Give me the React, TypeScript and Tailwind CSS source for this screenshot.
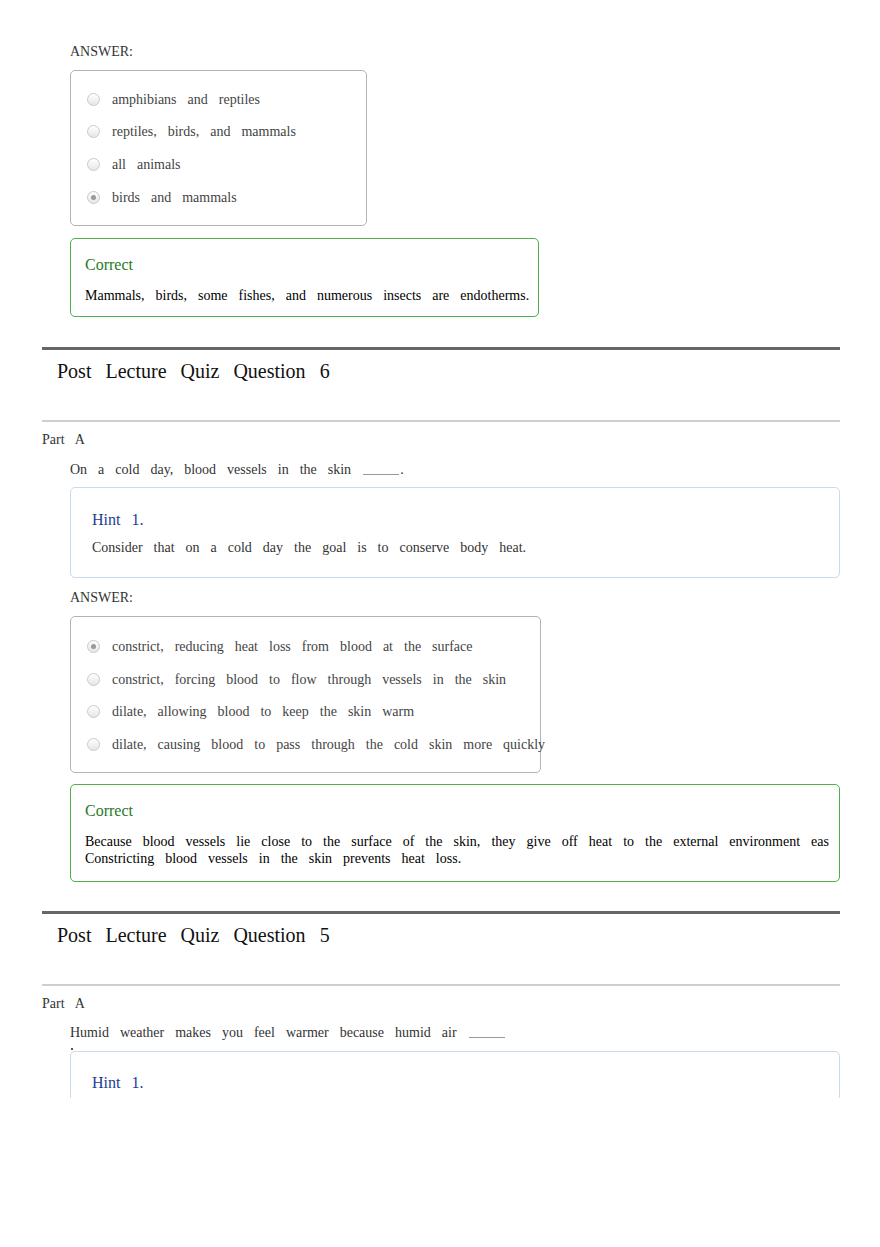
import React from 'react';

type Option = { text: string; checked?: boolean };

function Radio({ checked }: { checked?: boolean }) {
  return (
    <span className="w-[13px] h-[13px] rounded-full border border-[#c9c9c9] bg-gradient-to-b from-white to-[#e6e6e6] flex items-center justify-center shrink-0">
      {checked && <span className="w-[5px] h-[5px] rounded-full bg-[#9a9a9a]" />}
    </span>
  );
}

function AnswerBox({ options, width, pt }: { options: Option[]; width: string; pt: string }) {
  return (
    <div className={`${width} ${pt} pb-[11px] border border-[#b3b3b3] rounded-[5px]`}>
      {options.map((o) => (
        <div key={o.text} className="h-[32.67px] flex items-center pl-[16px] gap-[12px] whitespace-nowrap">
          <Radio checked={o.checked} />
          <span className="text-[#444] text-[14px] leading-[17px] [word-spacing:7.5px]">{o.text}</span>
        </div>
      ))}
    </div>
  );
}

function Blank() {
  return <span className="inline-block w-[36px] border-b border-[#999] align-baseline translate-y-[1px] mx-[1px]" />;
}

function Heading({ n }: { n: number }) {
  return (
    <>
      <div className="h-[3px] bg-[#666]" />
      <h2 className="mt-[8.5px] ml-[15px] text-[20px] leading-[24px] text-[#111] [word-spacing:9px]">
        Post Lecture Quiz Question {n}
      </h2>
      <div className="mt-[37px] h-[2px] bg-[#cfcfcf]" />
    </>
  );
}

export default function App() {
  const text14 = 'text-[14px] leading-[17px] [word-spacing:7.5px]';
  return (
    <div className="w-[880px] h-[1247px] bg-white font-[family-name:'Liberation_Serif','Times_New_Roman',serif]">
      <div className="h-[1098px] overflow-hidden pl-[42px] pr-[40px] pt-[43px]">
        {/* previous question tail */}
        <div className="pl-[28px]">
          <p className={`${text14} text-[#333]`}>ANSWER:</p>
          <div className="mt-[10px]">
            <AnswerBox
              width="w-[297px]"
              pt="pt-[12px]"
              options={[
                { text: 'amphibians and reptiles' },
                { text: 'reptiles, birds, and mammals' },
                { text: 'all animals' },
                { text: 'birds and mammals', checked: true },
              ]}
            />
          </div>
          <div className="mt-[12px] w-[469px] border-[1.5px] border-[#4db04a] rounded-[5px] pl-[14px] pt-[16px] pb-[12px]">
            <p className="text-[16px] leading-[20px] text-[#1f7a1f]">Correct</p>
            <p className={`mt-[12.5px] ${text14} text-black`}>
              Mammals, birds, some fishes, and numerous insects are endotherms.
            </p>
          </div>
        </div>

        {/* Question 6 */}
        <div className="mt-[30px]">
          <Heading n={6} />
          <p className={`mt-[9.5px] ${text14} text-[#333]`}>Part A</p>
          <div className="pl-[28px]">
            <p className={`mt-[13px] ${text14} text-[#333]`}>
              On a cold day, blood vessels in the skin <Blank />.
            </p>
            <div className="mt-[8.5px] border border-[#c8dbef] rounded-[5px] pl-[21px] pt-[22px] pb-[20.5px]">
              <p className="text-[16px] leading-[20px] text-[#1b3d96] [word-spacing:7px]">Hint 1.</p>
              <p className={`mt-[9.5px] ${text14} text-[#333]`}>
                Consider that on a cold day the goal is to conserve body heat.
              </p>
            </div>
            <p className={`mt-[11px] ${text14} text-[#333]`}>ANSWER:</p>
            <div className="mt-[10.5px]">
              <AnswerBox
                width="w-[471px]"
                pt="pt-[13px]"
                options={[
                  { text: 'constrict, reducing heat loss from blood at the surface', checked: true },
                  { text: 'constrict, forcing blood to flow through vessels in the skin' },
                  { text: 'dilate, allowing blood to keep the skin warm' },
                  { text: 'dilate, causing blood to pass through the cold skin more quickly' },
                ]}
              />
            </div>
            <div className="mt-[11px] border-[1.5px] border-[#4db04a] rounded-[5px] pl-[14px] pt-[16px] pb-[14px]">
              <p className="text-[16px] leading-[20px] text-[#1f7a1f]">Correct</p>
              <div className="mt-[12.5px] text-black text-[14px] leading-[17px]">
                <p className="w-[744px] text-justify [text-align-last:justify]">
                  Because blood vessels lie close to the surface of the skin, they give off heat to the external environment eas
                </p>
                <p className="[word-spacing:7.5px]">Constricting blood vessels in the skin prevents heat loss.</p>
              </div>
            </div>
          </div>
        </div>

        {/* Question 5 */}
        <div className="mt-[29px]">
          <Heading n={5} />
          <p className={`mt-[9.5px] ${text14} text-[#333]`}>Part A</p>
          <div className="pl-[28px]">
            <p className={`mt-[12px] ${text14} text-[#333]`}>
              Humid weather makes you feel warmer because humid air <Blank />
            </p>
            <div className="relative">
              <span className="absolute left-[1px] top-[7px] w-[2px] h-[2px] bg-[#555]" />
            </div>
            <div className="mt-[9.5px] border border-[#c8dbef] rounded-[5px] pl-[21px] pt-[21px] pb-[40px]">
              <p className="text-[16px] leading-[20px] text-[#1b3d96] [word-spacing:7px]">Hint 1.</p>
              <p className={`mt-[9.5px] ${text14} text-[#333]`}>&nbsp;</p>
            </div>
          </div>
        </div>
      </div>
    </div>
  );
}
